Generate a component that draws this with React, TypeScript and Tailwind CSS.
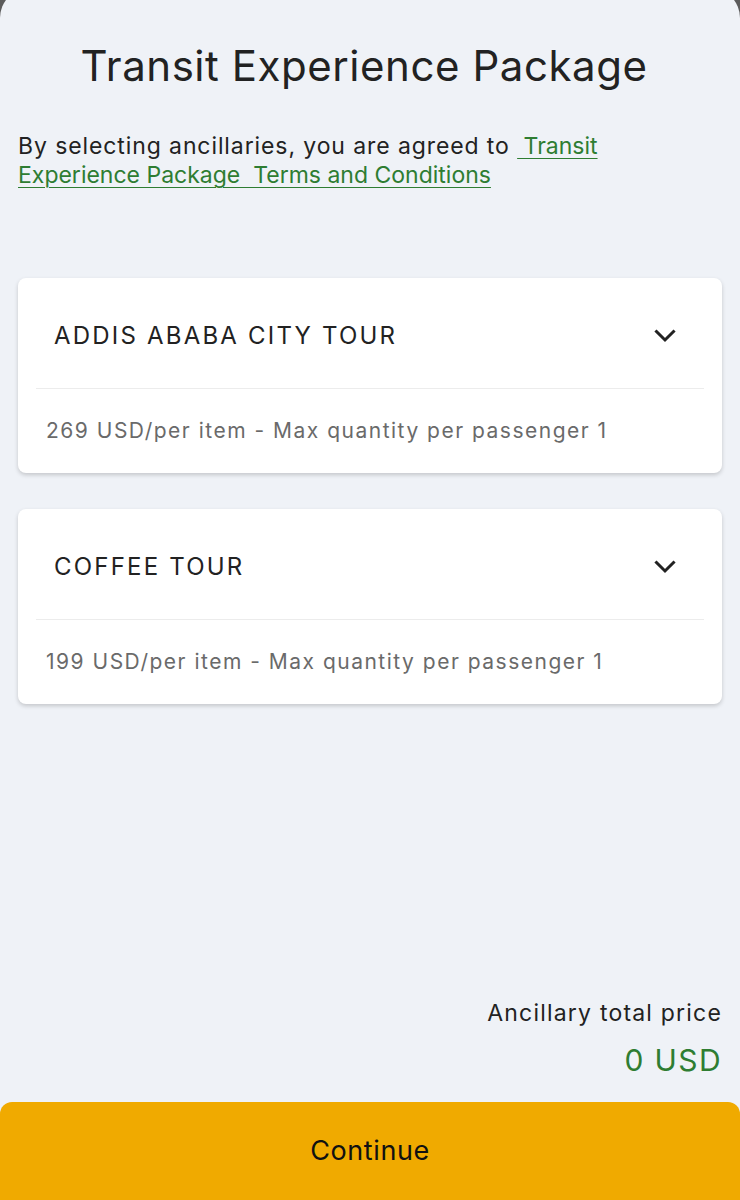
const tours = [
  { name: 'ADDIS ABABA CITY TOUR', price: 269, max: 1 },
  { name: 'COFFEE TOUR', price: 199, max: 1 },
];

function Chevron() {
  return (
    <svg width="22" height="14" viewBox="0 0 22 14" fill="none">
      <polyline points="2.5,2.5 11,11 19.5,2.5" stroke="#222" strokeWidth="3" strokeLinecap="square" />
    </svg>
  );
}

function TourCard({ name, price, max }: { name: string; price: number; max: number }) {
  return (
    <div className="bg-white rounded-[8px] shadow-[0_2px_4px_rgba(0,0,0,0.18)]">
      <div className="h-[110px] flex items-center justify-between pl-[36px] pr-[46px] pt-[6px]">
        <span className="text-[24px] tracking-[2.2px] text-[#222]">{name}</span>
        <Chevron />
      </div>
      <div className="mx-[18px] h-px bg-[#ececec]" />
      <div className="h-[84px] flex items-center px-[28px] text-[21px] text-[#6a6a6a] tracking-[1.5px]">
        {price} USD/per item - Max quantity per passenger {max}
      </div>
    </div>
  );
}

export default function App() {
  return (
    <div className="h-[1200px] bg-[#5c5c5c] overflow-hidden font-['Inter',sans-serif]">
      <div className="-mt-[12px] h-[1212px] bg-[#eff2f7] rounded-t-[30px] flex flex-col pt-[12px]">
        <h1 className="mt-[42px] pr-[12px] text-center text-[42px] leading-[48px] tracking-[0.55px] text-[#222]">
          Transit Experience Package
        </h1>
        <p className="mt-[42px] px-[18px] text-[23px] leading-[29px] tracking-[0.9px] text-[#222]">
          By selecting ancillaries, you are agreed to{' '}
          <a className="text-[#2e7d32] tracking-[0px] underline underline-offset-[4px] decoration-1">
            &nbsp;Transit Experience Package&nbsp; Terms and Conditions
          </a>
        </p>

        <div className="mt-[88px] px-[18px] flex flex-col gap-[36px]">
          {tours.map((t) => (
            <TourCard key={t.name} {...t} />
          ))}
        </div>

        <div className="mt-auto px-[18px] flex flex-col items-end">
          <span className="text-[23px] leading-[30px] text-[#222] tracking-[1.2px]">Ancillary total price</span>
          <span className="mt-[14px] text-[30px] leading-[36px] text-[#2e7d32] tracking-[1.4px]">0 USD</span>
        </div>

        <button className="mt-[24px] h-[98px] w-full bg-[#f0aa00] rounded-t-[12px] text-[27px] tracking-[0.6px] text-[#111]">
          Continue
        </button>
      </div>
    </div>
  );
}
